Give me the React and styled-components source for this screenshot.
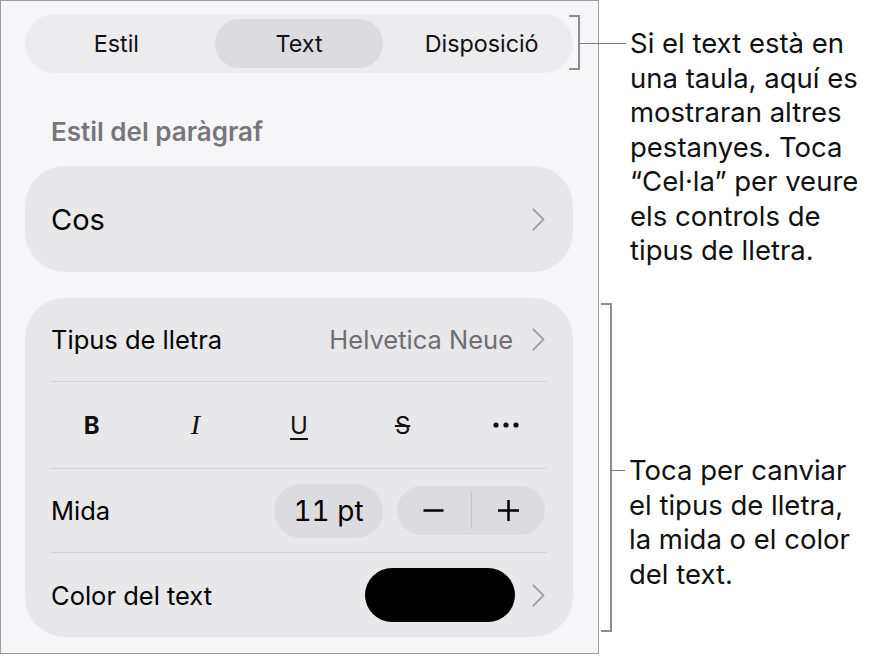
import React from 'react'
import styled, { createGlobalStyle } from 'styled-components'

const GlobalStyle = createGlobalStyle`
  body {
    margin: 0;
    background: #ffffff;
    font-family: Inter, "Noto Sans", sans-serif;
    color: #000;
  }
`

const Chevron = () => (
  <ChevronIcon width="13" height="23" viewBox="0 0 13 23">
    <path d="M1.5 1.5 L11.5 11.5 L1.5 21.5" fill="none" stroke="#a2a2a7" strokeWidth="2" strokeLinecap="round" strokeLinejoin="round" />
  </ChevronIcon>
)

const Dots = () => (
  <svg width="26" height="6" viewBox="0 0 26 6">
    <circle cx="3" cy="3" r="2.6" fill="#111" />
    <circle cx="13" cy="3" r="2.6" fill="#111" />
    <circle cx="23" cy="3" r="2.6" fill="#111" />
  </svg>
)

const Minus = () => (
  <svg width="21" height="21" viewBox="0 0 21 21">
    <line x1="0.5" y1="10.5" x2="20.5" y2="10.5" stroke="#000" strokeWidth="2.5" />
  </svg>
)

const Plus = () => (
  <svg width="21" height="21" viewBox="0 0 21 21">
    <line x1="0" y1="10.5" x2="21" y2="10.5" stroke="#000" strokeWidth="2.5" />
    <line x1="10.5" y1="0" x2="10.5" y2="21" stroke="#000" strokeWidth="2.5" />
  </svg>
)

const App = () => {
  return (
    <Page>
      <GlobalStyle />
      <Panel>
        <Segmented>
          <Segment>Estil</Segment>
          <Segment $active>Text</Segment>
          <Segment>Disposició</Segment>
        </Segmented>

        <SectionTitle>Estil del paràgraf</SectionTitle>

        <StyleCard>
          <CosLabel>Cos</CosLabel>
          <Chevron />
        </StyleCard>

        <FontCard>
          <Row $h={83}>
            <Label>Tipus de lletra</Label>
            <Trail>
              <Value>Helvetica Neue</Value>
              <Chevron />
            </Trail>
          </Row>
          <Divider />
          <Row $h={86}>
            <StyleGrid>
              <StyleButton $kind="bold">B</StyleButton>
              <StyleButton $kind="italic">I</StyleButton>
              <StyleButton $kind="underline">U</StyleButton>
              <StyleButton $kind="strike">S</StyleButton>
              <StyleButton><Dots /></StyleButton>
            </StyleGrid>
          </Row>
          <Divider />
          <Row $h={83}>
            <Label>Mida</Label>
            <Trail $gap={14}>
              <SizePill>11 pt</SizePill>
              <Stepper>
                <StepHalf><Minus /></StepHalf>
                <StepDivider />
                <StepHalf><Plus /></StepHalf>
              </Stepper>
            </Trail>
          </Row>
          <Divider />
          <Row $h={84}>
            <Label>Color del text</Label>
            <Trail $gap={17}>
              <Swatch />
              <Chevron />
            </Trail>
          </Row>
        </FontCard>
      </Panel>

      <Notes>
        <Callout $top={15} $left={0}>
          <Bracket $h={55} />
          <Lead $offset={11}>
            <Connector $w={46} />
            <NoteText>
              Si el text està en<br />
              una taula, aquí es<br />
              mostraran altres<br />
              pestanyes. Toca<br />
              “Cel·la” per veure<br />
              els controls de<br />
              tipus de lletra.
            </NoteText>
          </Lead>
        </Callout>

        <Callout $top={35.5} $left={32}>
          <Bracket $h={329} />
          <Lead $offset={150}>
            <Connector $w={13} />
            <NoteText>
              Toca per canviar<br />
              el tipus de lletra,<br />
              la mida o el color<br />
              del text.
            </NoteText>
          </Lead>
        </Callout>
      </Notes>
    </Page>
  )
}

const Page = styled.div`
  display: flex;
  align-items: flex-start;
  width: 878px;
  height: 657px;
`

const Panel = styled.section`
  box-sizing: border-box;
  flex: none;
  width: 599px;
  height: 654px;
  padding: 13px 25px 0 24px;
  background: #f6f6f8;
  border: 1px solid #9c9c9c;
`

const Segmented = styled.div`
  display: grid;
  grid-template-columns: repeat(3, 1fr);
  height: 59px;
  box-sizing: border-box;
  padding: 5px 0;
  border-radius: 30px;
  background: #ececef;
`

const Segment = styled.div`
  display: flex;
  align-items: center;
  justify-content: center;
  margin: 0 7px;
  border-radius: 25px;
  font-size: 23.3px;
  color: #111;
  background: ${({ $active }) => ($active ? '#dcdce0' : 'transparent')};
`

const SectionTitle = styled.h3`
  margin: 47px 0 0 26px;
  height: 24px;
  line-height: 24px;
  font-size: 26px;
  font-weight: 600;
  color: #77777b;
`

const StyleCard = styled.div`
  display: flex;
  align-items: center;
  justify-content: space-between;
  height: 106px;
  margin-top: 22px;
  padding: 0 28px 0 26px;
  border-radius: 40px;
  background: #e8e8eb;
`

const CosLabel = styled.span`
  font-size: 29px;
`

const ChevronIcon = styled.svg`
  flex: none;
  display: block;
`

const FontCard = styled.div`
  margin-top: 26px;
  padding: 0 26px 0 26px;
  border-radius: 40px;
  background: #e8e8eb;
`

const Row = styled.div`
  display: flex;
  align-items: center;
  justify-content: space-between;
  height: ${({ $h }) => $h}px;
  padding-right: 2px;
`

const Label = styled.span`
  font-size: 25.5px;
`

const Trail = styled.div`
  display: flex;
  align-items: center;
  gap: ${({ $gap }) => $gap ?? 19}px;
`

const Value = styled.span`
  font-size: 25.5px;
  color: #6e6e73;
`

const Divider = styled.div`
  height: 1px;
  background: #d2d2d6;
`

const StyleGrid = styled.div`
  display: grid;
  grid-template-columns: repeat(5, 1fr);
  flex: 1;
  margin: 0 -13px 0 -11px;
`

const StyleButton = styled.div`
  display: flex;
  align-items: center;
  justify-content: center;
  height: 40px;
  font-size: ${({ $kind }) => ($kind === 'italic' ? 28 : 24)}px;
  color: #111;
  font-weight: ${({ $kind }) => ($kind === 'bold' ? 700 : 400)};
  font-family: ${({ $kind }) => ($kind === 'italic' ? '"Liberation Serif", serif' : 'Inter, sans-serif')};
  font-style: ${({ $kind }) => ($kind === 'italic' ? 'italic' : 'normal')};
  text-decoration: ${({ $kind }) =>
    $kind === 'underline' ? 'underline' : $kind === 'strike' ? 'line-through' : 'none'};
  text-decoration-thickness: 2px;
  text-underline-offset: 4px;
`

const SizePill = styled.div`
  display: flex;
  align-items: center;
  justify-content: center;
  width: 109px;
  height: 54px;
  border-radius: 27px;
  background: #dcdce0;
  font-size: 28px;
  font-variant-numeric: tabular-nums;
`

const Stepper = styled.div`
  display: flex;
  align-items: center;
  width: 148px;
  height: 49px;
  border-radius: 25px;
  background: #dcdce0;
`

const StepHalf = styled.div`
  flex: 1;
  display: flex;
  align-items: center;
  justify-content: center;
`

const StepDivider = styled.div`
  width: 1px;
  height: 37px;
  background: #c4c4c8;
`

const Swatch = styled.div`
  width: 150px;
  height: 54px;
  border-radius: 27px;
  background: #000;
`

const Notes = styled.div`
  display: flex;
  flex-direction: column;
  margin-left: -30px;
  position: relative;
`

const Callout = styled.div`
  display: flex;
  align-items: flex-start;
  margin-top: ${({ $top }) => $top}px;
  margin-left: ${({ $left }) => $left}px;
`

const Bracket = styled.div`
  box-sizing: border-box;
  flex: none;
  width: 11px;
  height: ${({ $h }) => $h}px;
  border: 2px solid #8d8d8d;
  border-left: none;
`

const Lead = styled.div`
  display: flex;
  align-items: flex-start;
  margin-top: ${({ $offset }) => $offset}px;
`

const Connector = styled.div`
  flex: none;
  width: ${({ $w }) => $w}px;
  height: 1px;
  margin-top: 17px;
  margin-right: 4px;
  background: #7a7a7a;
`

const NoteText = styled.p`
  margin: 0;
  font-size: 27.5px;
  line-height: 34.5px;
  color: #111;
  white-space: nowrap;
`

export default App
